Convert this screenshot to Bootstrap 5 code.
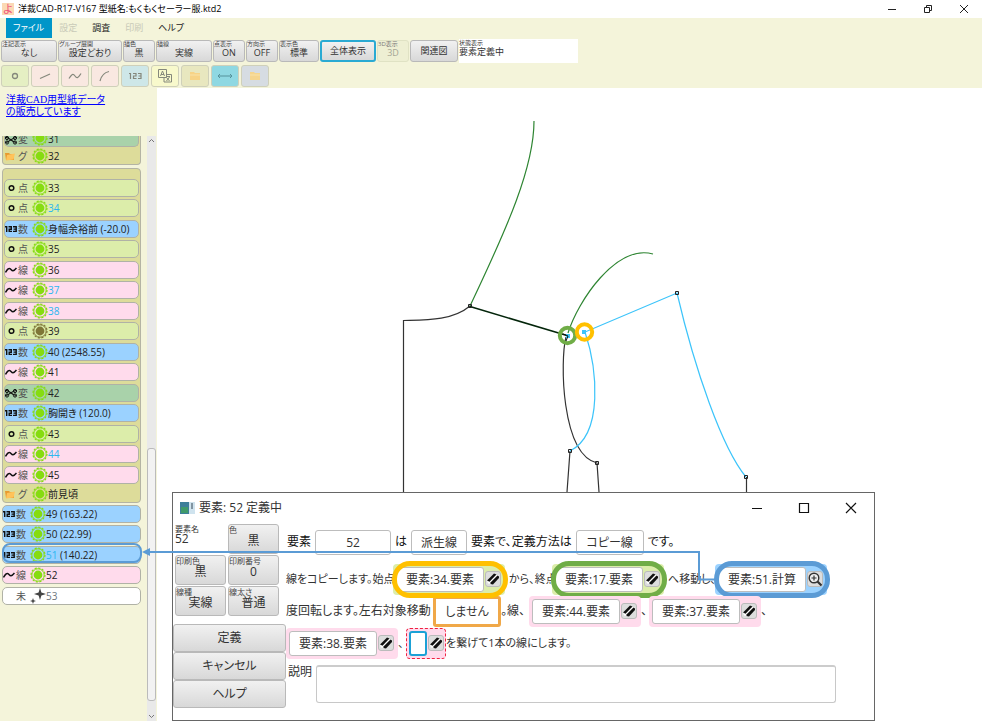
<!DOCTYPE html>
<html lang="ja">
<head>
<meta charset="utf-8">
<meta name="viewport" content="width=device-width, initial-scale=1">
<title>洋裁CAD-R17-V167</title>
<link href="https://cdn.jsdelivr.net/npm/bootstrap@5.3.0/dist/css/bootstrap.min.css" rel="stylesheet">
<style>
body{font-family:"Open Sans","Noto Sans CJK JP",sans-serif;font-size:10px;line-height:14px;font-feature-settings:"palt";color:#222;background:#fff}
input,textarea,button{font-feature-settings:"palt"}
.app{min-height:100vh}
.title-bar{height:18px;font-size:9px;padding-left:2px;color:#000}
.app-logo{width:12px;height:12px;background:#fbd9b4;color:#f0507a;font-size:11px;line-height:12px;text-align:center}
.win-btn{width:36px;height:18px;border:0;background:none;padding:0;display:flex;align-items:center;justify-content:center}
.cream{background:#f4f4da}
.menu-bar{padding-left:6px;font-size:9px}
.menu-item{height:20px;padding:0 8px 0 7px;line-height:20px;color:#222;text-decoration:none}
.menu-item.active{background:#0096c9;color:#fff}
.menu-item.off{color:#c9cab8}
.tools{height:25px;padding:1px;gap:1px}
.grey-btn{border:1px solid #b9b9b9;border-radius:3px;background:linear-gradient(#f1f1f1,#d8d8d8);color:#333;padding:0;font-size:9px;height:22px;line-height:10px;display:flex;flex-direction:column;align-items:center;justify-content:center}
.grey-btn small{align-self:flex-start;font-size:6px;line-height:7px;white-space:nowrap;color:#444}
.grey-btn:has(small){justify-content:flex-start}
.grey-btn.on{border:2px solid #2aaad3}
.grey-btn:disabled{border-color:#e0e2c4;background:#eeefd3;color:#a5a694}
.grey-btn:disabled small{color:#777}
.w-32{width:32px}.w-40{width:40px}.w-48{width:48px}.w-56{width:56px}.w-64{width:64px}
.status-box{width:119px;height:24px;padding-top:1px;background:#fff;font-size:9px;line-height:10px;color:#333}
.status-box small{display:block;font-size:6px;line-height:7px}
.icons{height:25px;padding:2px 1px;gap:2px}
.tile{width:28px;height:22px;border:1px solid #cfd0ba;border-radius:3px;padding:0;display:flex;align-items:center;justify-content:center;color:#85887c}
.t-green{background:#e5efc3}.t-pink{background:#f9e8e1}.t-blue{background:#cee7e8}.t-yellow{background:#f8f9cc}.t-olive{background:#e8e7bf}.t-teal{background:#8fd8e2}.t-grey{background:#d6dce2}
.side{width:157px}
.promo{font-family:"Liberation Serif","Noto Sans CJK JP",serif;font-size:10px;line-height:12px;padding:6px 0 0 6px;height:48px}
.promo a{color:#00f}
.tree{width:147px;padding-left:2px}
.group-box{width:139px;border:1px solid #b4b4a4;border-radius:4px;background:#dddc9a;padding:0 1px}
.group-box.cut{border-top:0;border-radius:0 0 4px 4px;margin-bottom:3px;height:29px}
.group-box.full{padding-top:10px;margin-bottom:2px}
.node{position:relative;height:18px;border:1px solid #b0b2a6;border-radius:5px;display:flex;align-items:center;margin-bottom:2px;color:#222;text-decoration:none;white-space:nowrap}
.node:nth-child(even){margin-bottom:3px}
.tree>.node{width:139px}
.node .kind{width:12px;height:12px;flex:none}
.node .kanji{width:15px;padding-left:1px;color:#555;flex:none}
.node .sun{width:16px;height:16px;flex:none;color:#86dc10}
.node .sun.dim{color:#7f7638}
.node.cut{height:11px;border-top:0;border-radius:0 0 5px 5px;align-items:flex-end;overflow:hidden;margin-bottom:1px}
.node .copied{color:#29b6f0}
.n-point{background:#dcedaa}.n-num{background:#9bd2ff}.n-line{background:#ffdbec}.n-mod{background:#a9d2aa}.n-none{background:#fff}
.node.n-folder{border-color:transparent;height:16px;margin:0}
.picked::after{content:"";position:absolute;left:-1px;right:-2px;top:-4px;bottom:0;border:2px solid #5b9bd5;border-radius:8px}
.scroller{width:9px;background:#e9e9e9}
.before{flex:301}.after{flex:10}
.thumb{border:1px solid #bbb;border-radius:3px;background:#f2f2f2;flex:251}
.canvas{min-width:0}
.drawing{width:100%;height:100%;position:absolute;left:0;top:0}
.dialog-win{position:absolute;left:15px;bottom:0;width:703px;height:229px;border:1px solid #666;background:#fff;font-size:12px;color:#333}
.dlg-title{height:30px;padding-left:7px;font-size:12px}
.dlg-btn{width:47px;height:30px;border:0;background:none;padding:0;display:flex;align-items:center;justify-content:center}
.dlg-left{width:113px}
.props{display:grid;grid-template-columns:51px 51px;gap:1px 2px;padding:1px 2px 8px}
.props .grey-btn{height:30px;font-size:12px;line-height:13px}
.props small{font-size:8px;line-height:9px}
.name-cell{height:30px;line-height:12px;font-size:12px}
.name-cell small{display:block}
.wide-btn{height:28px;font-size:12px}
.formula{padding-top:1px;font-size:12px}
.f-row{height:32px;display:flex;align-items:center;white-space:nowrap}
.f-row.head{height:39px;padding-bottom:3px;gap:4px;color:#111;padding-left:1px}
.f-row.tight{font-size:11px}
.field{border:1px solid #bdbdbd;border-radius:3px;height:25px;padding:0;font-size:12px;color:#333;background:#fff;text-align:center;min-width:0;flex:none}
.w-76{width:76px}.w-68{width:68px}.w-88{width:88px}.w-18{width:18px}
.slot{position:relative;display:flex;align-items:center;gap:1px;height:31px;padding:0 3px;border-radius:4px;width:112px;flex:none}
.slot.tiny{width:40px;padding:0 2px;border:1px dashed #f02040}
.slot.tiny .field{border:2px solid #1ba1d6}
.erase{width:16px;height:16px;border:1px solid #bbb;border-radius:3px;background:#ddd;padding:0;display:flex;flex:none}
.ring::after{content:"";position:absolute;inset:-3px -3px -3px -1px;border:5px solid;border-radius:18px;pointer-events:none}
.r-gold::after{border-color:#ffc000}.r-green::after{border-color:#70ad47}.r-blue::after{border-color:#5b9bd5}
.choice{width:68px;height:31px;border:3px solid #f0a848;flex:none}
.t-107{width:107px}.t-47{width:47px}.t-147{width:147px}.t-28{width:28px}.t-8{width:8px}
.memo-row{padding:6px 0 0 2px;gap:4px}
.memo{width:520px;height:38px;border:1px solid #c8c8c8;border-top:2px solid #ccc;border-radius:3px;resize:none}
.links{position:absolute;left:0;top:0;width:100%;height:100%;pointer-events:none}
</style>
<script src="https://cdn.jsdelivr.net/npm/bootstrap@5.3.0/dist/js/bootstrap.bundle.min.js"></script>
</head>
<body>
<svg class="d-none" aria-hidden="true">
  <symbol id="sun" viewBox="0 0 16 16"><circle cx="8" cy="8" r="7" fill="none" stroke="currentColor" stroke-width="1.2" stroke-dasharray="2.2 1.464"/><circle cx="8" cy="8" r="6.200" fill="none" stroke="currentColor" stroke-width="1"/><circle cx="8" cy="8" r="4.400" fill="currentColor"/></symbol>
  <symbol id="k-point" viewBox="0 0 12 12"><circle cx="6.500" cy="6" r="2.300" fill="none" stroke="#111" stroke-width="1.500"/></symbol>
  <symbol id="k-line" viewBox="0 0 12 12"><path d="M.5 8.500C2.500 5 4 3.500 5.500 5S8 8.500 11.500 4" fill="none" stroke="#111" stroke-width="1.500"/></symbol>
  <symbol id="k-num" viewBox="0 0 12 12"><path d="M0 3.700H1.700V9M3.500 3.700H6.300V6.200H4.200V8.400H7M8 3.700H11.200V8.400H8M8.500 6.100H11" fill="none" stroke="#111" stroke-width="1.400"/></symbol>
  <symbol id="k-mod" viewBox="0 0 12 12"><path d="M0 3.500C4 2 7 9 11.500 8.500M0 8.500C4 9 7 3 11.500 3.500" fill="none" stroke="#111" stroke-width="1.200"/><circle cx="2" cy="4" r="1.600" fill="none" stroke="#111"/><circle cx="2" cy="8.500" r="1.600" fill="none" stroke="#111"/><circle cx="10" cy="4" r="1.600" fill="none" stroke="#111"/><circle cx="10" cy="8.500" r="1.600" fill="none" stroke="#111"/></symbol>
  <symbol id="k-folder" viewBox="0 0 12 12"><path d="M0 3H4L5 4H9V10H1Z" fill="#e89a2e"/><path d="M2 5L10 3.500L8.500 9.500L1 10.500Z" fill="#ffc35a"/></symbol>
  <symbol id="eraser" viewBox="0 0 14 14"><path d="M1 8.500L8 1.500L13 4L6.500 12L2 11.500Z" fill="#fff"/><path d="M1 8.500L8 1.500L10.500 2.500L3.500 9.800Z" fill="#111"/><path d="M4.500 10.500L11.500 3.500L13 4.500V6L7 12.500L4.500 12Z" fill="#111"/></symbol>
</svg>

<div class="app d-flex flex-column position-relative">
  <header>
    <div class="title-bar d-flex align-items-center">
      <span class="app-logo">よ</span><span class="ps-1">洋裁CAD-R17-V167 型紙名:もくもくセーラー服.ktd2</span>
      <div class="d-flex ms-auto">
        <button class="win-btn" aria-label="最小化"><svg width="10" height="10"><path d="M1 5.500H9" stroke="#222"/></svg></button>
        <button class="win-btn" aria-label="元に戻す"><svg width="10" height="10"><path d="M1.500 3.500H6.500V8.500H1.500ZM3.500 3V1.500H8.500V6.500H7" fill="none" stroke="#222"/></svg></button>
        <button class="win-btn" aria-label="閉じる"><svg width="10" height="10"><path d="M1 1L9 9M9 1L1 9" stroke="#222"/></svg></button>
      </div>
    </div>
    <div class="cream">
      <nav class="menu-bar d-flex">
        <a href="#" class="menu-item active">ファイル</a><a href="#" class="menu-item off">設定</a><a href="#" class="menu-item">調査</a><a href="#" class="menu-item off">印刷</a><a href="#" class="menu-item">ヘルプ</a>
      </nav>
      <div class="tools d-flex align-items-center">
        <button class="grey-btn w-56"><small>注記表示</small>なし</button>
        <button class="grey-btn w-64"><small>グループ展開</small>設定どおり</button>
        <button class="grey-btn w-32"><small>描色</small>黒</button>
        <button class="grey-btn w-56"><small>描線</small>実線</button>
        <button class="grey-btn w-32"><small>点表示</small>ON</button>
        <button class="grey-btn w-32"><small>方向示</small>OFF</button>
        <button class="grey-btn w-40"><small>表示色</small>標準</button>
        <button class="grey-btn w-56 on">全体表示</button>
        <button class="grey-btn w-32" disabled><small>3D表示</small>3D</button>
        <button class="grey-btn w-48">関連図</button>
        <div class="status-box"><small>状態表示</small>要素定義中</div>
      </div>
      <div class="icons d-flex">
        <button class="tile t-green" aria-label="点"><svg width="18" height="14"><circle cx="9" cy="7" r="2.500" fill="none" stroke="currentColor" stroke-width="1.300"/></svg></button>
        <button class="tile t-pink" aria-label="直線"><svg width="18" height="14"><path d="M4 9.500L14 5" stroke="currentColor" stroke-width="1.200"/></svg></button>
        <button class="tile t-pink" aria-label="曲線"><svg width="18" height="14"><path d="M3 9.500C6 5 7 4 9 7S12 9 15 4.500" fill="none" stroke="currentColor" stroke-width="1.200"/></svg></button>
        <button class="tile t-pink" aria-label="円弧"><svg width="18" height="14"><path d="M4 12Q6 4 13 2.500" fill="none" stroke="currentColor" stroke-width="1.200"/></svg></button>
        <button class="tile t-blue" aria-label="数値"><svg width="16" height="14"><path d="M2 4.500H3.500V10M6 4.500H9V7H6.500V9.500H9.500M11 4.500H14V9.500H11M11.500 7H14" fill="none" stroke="currentColor" stroke-width="1.200"/></svg></button>
        <button class="tile t-yellow" aria-label="文字"><svg width="16" height="16"><path d="M1.500 1.500H9.500V9.500H1.500ZM7 9.500V14H14.500V6.500H9.500M3.500 8L5.500 3L7.500 8M4 6.500H7M9 8.500H13M9.500 13L12.500 9M9.500 9.500L12.500 13" fill="none" stroke="currentColor"/></svg></button>
        <button class="tile t-olive" aria-label="グループ"><svg width="12" height="10"><path d="M1 1H5L6 2H11V9H1Z" fill="#f7d386"/><path d="M1 4H11" stroke="#f9e2a8"/></svg></button>
        <button class="tile t-teal" aria-label="寸法"><svg width="18" height="10"><path d="M2 5H16M4 3L2 5L4 7M14 3L16 5L14 7" fill="none" stroke="#55929b"/></svg></button>
        <button class="tile t-grey" aria-label="フォルダ"><svg width="12" height="10"><path d="M1 1H5L6 2H11V9H1Z" fill="#f5d58e"/><path d="M1 4H11" stroke="#f9e2a8"/></svg></button>
      </div>
    </div>
  </header>

  <div class="d-flex flex-grow-1">
    <aside class="side cream flex-shrink-0 d-flex flex-column">
      <div class="promo"><a href="#">洋裁CAD用型紙データ<br>の販売しています</a></div>
      <div class="d-flex flex-grow-1">
        <div class="tree">
          <div class="group-box cut">
            <a href="#" class="node cut n-mod"><svg class="kind"><use href="#k-mod"/></svg><span class="kanji">変</span><svg class="sun"><use href="#sun"/></svg><span>31</span></a>
            <a href="#" class="node n-folder"><svg class="kind"><use href="#k-folder"/></svg><span class="kanji">グ</span><svg class="sun"><use href="#sun"/></svg><span>32</span></a>
          </div>
          <div class="group-box full">
            <a href="#" class="node n-point"><svg class="kind"><use href="#k-point"/></svg><span class="kanji">点</span><svg class="sun"><use href="#sun"/></svg><span>33</span></a>
            <a href="#" class="node n-point"><svg class="kind"><use href="#k-point"/></svg><span class="kanji">点</span><svg class="sun"><use href="#sun"/></svg><span class="copied">34</span></a>
            <a href="#" class="node n-num"><svg class="kind"><use href="#k-num"/></svg><span class="kanji">数</span><svg class="sun"><use href="#sun"/></svg><span>身幅余裕前 (-20.0)</span></a>
            <a href="#" class="node n-point"><svg class="kind"><use href="#k-point"/></svg><span class="kanji">点</span><svg class="sun"><use href="#sun"/></svg><span>35</span></a>
            <a href="#" class="node n-line"><svg class="kind"><use href="#k-line"/></svg><span class="kanji">線</span><svg class="sun"><use href="#sun"/></svg><span>36</span></a>
            <a href="#" class="node n-line"><svg class="kind"><use href="#k-line"/></svg><span class="kanji">線</span><svg class="sun"><use href="#sun"/></svg><span class="copied">37</span></a>
            <a href="#" class="node n-line"><svg class="kind"><use href="#k-line"/></svg><span class="kanji">線</span><svg class="sun"><use href="#sun"/></svg><span class="copied">38</span></a>
            <a href="#" class="node n-point"><svg class="kind"><use href="#k-point"/></svg><span class="kanji">点</span><svg class="sun dim"><use href="#sun"/></svg><span>39</span></a>
            <a href="#" class="node n-num"><svg class="kind"><use href="#k-num"/></svg><span class="kanji">数</span><svg class="sun"><use href="#sun"/></svg><span>40 (2548.55)</span></a>
            <a href="#" class="node n-line"><svg class="kind"><use href="#k-line"/></svg><span class="kanji">線</span><svg class="sun"><use href="#sun"/></svg><span>41</span></a>
            <a href="#" class="node n-mod"><svg class="kind"><use href="#k-mod"/></svg><span class="kanji">変</span><svg class="sun"><use href="#sun"/></svg><span>42</span></a>
            <a href="#" class="node n-num"><svg class="kind"><use href="#k-num"/></svg><span class="kanji">数</span><svg class="sun"><use href="#sun"/></svg><span>胸開き (120.0)</span></a>
            <a href="#" class="node n-point"><svg class="kind"><use href="#k-point"/></svg><span class="kanji">点</span><svg class="sun"><use href="#sun"/></svg><span>43</span></a>
            <a href="#" class="node n-line"><svg class="kind"><use href="#k-line"/></svg><span class="kanji">線</span><svg class="sun"><use href="#sun"/></svg><span class="copied">44</span></a>
            <a href="#" class="node n-line"><svg class="kind"><use href="#k-line"/></svg><span class="kanji">線</span><svg class="sun"><use href="#sun"/></svg><span>45</span></a>
            <a href="#" class="node n-folder"><svg class="kind"><use href="#k-folder"/></svg><span class="kanji">グ</span><svg class="sun"><use href="#sun"/></svg><span>前見頃</span></a>
          </div>
          <a href="#" class="node n-num"><svg class="kind"><use href="#k-num"/></svg><span class="kanji">数</span><svg class="sun"><use href="#sun"/></svg><span>49 (163.22)</span></a>
          <a href="#" class="node n-num"><svg class="kind"><use href="#k-num"/></svg><span class="kanji">数</span><svg class="sun"><use href="#sun"/></svg><span>50 (22.99)</span></a>
          <a href="#" class="node n-num picked"><svg class="kind"><use href="#k-num"/></svg><span class="kanji">数</span><svg class="sun"><use href="#sun"/></svg><span><span class="copied">51</span> (140.22)</span></a>
          <a href="#" class="node n-line"><svg class="kind"><use href="#k-line"/></svg><span class="kanji">線</span><svg class="sun"><use href="#sun"/></svg><span>52</span></a>
          <a href="#" class="node n-none"><span class="kind"></span><span class="kanji">未</span><svg class="sun" viewBox="0 0 16 16"><path d="M10 0L11.400 4.600L16 6L11.400 7.400L10 12L8.600 7.400L4 6L8.600 4.600ZM3 10L3.800 12.200L6 13L3.800 13.800L3 16L2.200 13.800L0 13L2.200 12.200Z" fill="#444"/></svg><span class="text-secondary">53</span></a>
        </div>
        <div class="scroller d-flex flex-column align-items-stretch">
          <svg width="9" height="10"><path d="M2 6L4.500 3.500L7 6" fill="none" stroke="#777"/></svg>
          <div class="before"></div>
          <div class="thumb"></div>
          <div class="after"></div>
          <svg width="9" height="10"><path d="M2 4L4.500 6.500L7 4" fill="none" stroke="#777"/></svg>
        </div>
      </div>
    </aside>

    <main class="canvas position-relative flex-grow-1">
      <svg class="drawing" viewBox="157 88 825 633" preserveAspectRatio="xMinYMin meet" fill="none">
        <g stroke="#333" stroke-width="1.200">
          <path d="M403.500 492V320.500C425 320 452 321 470 306"/>
          <path d="M566 337C560 360 561 454 597 463L599 492M570 451L567 492M746.500 477V492"/>
        </g>
        <path d="M534 121C534 167 508 226 470 306M568 333C578 301 616 244 653 254" stroke="#2e8532" stroke-width="1.200"/>
        <path d="M470 306.500L567 335.500" stroke="#03250a" stroke-width="1.500"/>
        <path d="M570 451C604 434 597 368 585 332L677 293C695 370 722 448 746 477" stroke="#3cc4fa" stroke-width="1.200"/>
        <path d="M468.500 304.500h3v3h-3zM675.500 291.500h3v3h-3zM568.500 449.500h3v3h-3zM595.500 461.500h3v3h-3zM744.500 475.500h3v3h-3z" stroke="#222"/>
        <path d="M582 330h4v4h-4zM566 334h4v4h-4z" fill="#3cc4fa"/><path d="M563 334L568 336L566 341" stroke="#111"/>
        <circle cx="567.500" cy="335.500" r="7.700" stroke="#70ad47" stroke-width="4"/>
        <circle cx="584.500" cy="332" r="7.700" stroke="#ffc000" stroke-width="4"/>
      </svg>

      <section class="dialog-win" aria-label="要素: 52 定義中">
        <div class="dlg-title d-flex align-items-center">
          <svg width="15" height="12"><path d="M0 0H15V12H0Z" fill="#cfe3ee"/><path d="M0 0H9V12H0Z" fill="#3d7f9a"/><path d="M1 5H8V11H1Z" fill="#3f9a6a"/><path d="M12 1V7" stroke="#345" stroke-width="1"/></svg>
          <span class="ps-1">要素: 52 定義中</span>
          <div class="d-flex ms-auto">
            <button class="dlg-btn" aria-label="最小化"><svg width="12" height="12"><path d="M1 6.500H11" stroke="#111"/></svg></button>
            <button class="dlg-btn" aria-label="最大化"><svg width="12" height="12"><path d="M1.500 1.500H10.500V10.500H1.500Z" fill="none" stroke="#111" stroke-width="1.200"/></svg></button>
            <button class="dlg-btn" aria-label="閉じる"><svg width="12" height="12"><path d="M1 1L11 11M11 1L1 11" stroke="#111" stroke-width="1.200"/></svg></button>
          </div>
        </div>
        <div class="d-flex">
          <div class="dlg-left">
            <div class="props">
              <div class="name-cell"><small>要素名</small>52</div>
              <button class="grey-btn"><small>色</small>黒</button>
              <button class="grey-btn"><small>印刷色</small>黒</button>
              <button class="grey-btn"><small>印刷番号</small>0</button>
              <button class="grey-btn"><small>線種</small>実線</button>
              <button class="grey-btn"><small>線太さ</small>普通</button>
            </div>
            <div class="d-flex flex-column">
              <button class="grey-btn wide-btn">定義</button>
              <button class="grey-btn wide-btn">キャンセル</button>
              <button class="grey-btn wide-btn">ヘルプ</button>
            </div>
          </div>
          <div class="formula">
            <div class="f-row head">
              <label for="f-no">要素</label><input id="f-no" class="field w-76" value="52"><label for="f-kind">は</label><input id="f-kind" class="field w-56" value="派生線"><label for="f-way">要素で、定義方法は</label><input id="f-way" class="field w-68" value="コピー線"><span>です。</span>
            </div>
            <div class="f-row tight">
              <span class="t-107">線をコピーします。始点</span>
              <span class="slot n-point ring r-gold"><input class="field w-88" aria-label="始点" value="要素:34.要素"><button class="erase" aria-label="消去"><svg width="14" height="14"><use href="#eraser"/></svg></button></span>
              <span class="t-47 ps-1">から、終点</span>
              <span class="slot n-point ring r-green"><input class="field w-88" aria-label="終点" value="要素:17.要素"><button class="erase" aria-label="消去"><svg width="14" height="14"><use href="#eraser"/></svg></button></span>
              <span class="t-47 ps-1">へ移動し、</span>
              <span class="slot n-num ring r-blue ms-1"><input class="field w-88" aria-label="角度" value="要素:51.計算"><button class="erase" aria-label="検索"><svg width="14" height="14"><circle cx="6" cy="6" r="4.800" fill="#eee" stroke="#333" stroke-width="1.400"/><path d="M3.500 6H8.500M6 3.500V8.500" stroke="#333" stroke-width="1.200"/><path d="M9.500 9.500L13.500 13.500" stroke="#333" stroke-width="2.200"/></svg></button></span>
            </div>
            <div class="f-row">
              <span class="t-147">度回転します。左右対象移動</span>
              <input class="field choice" aria-label="左右対象移動" value="しません">
              <span class="t-28">。線、</span>
              <span class="slot n-line"><input class="field w-88" aria-label="線1" value="要素:44.要素"><button class="erase" aria-label="消去"><svg width="14" height="14"><use href="#eraser"/></svg></button></span>
              <span class="t-8">、</span>
              <span class="slot n-line"><input class="field w-88" aria-label="線2" value="要素:37.要素"><button class="erase" aria-label="消去"><svg width="14" height="14"><use href="#eraser"/></svg></button></span>
              <span class="t-8">、</span>
            </div>
            <div class="f-row tight">
              <span class="slot n-line"><input class="field w-88" aria-label="線3" value="要素:38.要素"><button class="erase" aria-label="消去"><svg width="14" height="14"><use href="#eraser"/></svg></button></span>
              <span class="t-8">、</span>
              <span class="slot tiny n-line"><input class="field w-18" aria-label="線4"><button class="erase" aria-label="消去"><svg width="14" height="14"><use href="#eraser"/></svg></button></span>
              <span>を繋げて1本の線にします。</span>
            </div>
            <div class="memo-row d-flex"><label for="memo">説明</label><textarea id="memo" class="memo"></textarea></div>
          </div>
        </div>
      </section>
    </main>
  </div>

  <svg class="links" aria-hidden="true"><path d="M149 552H699V579.500H714" fill="none" stroke="#5b9bd5" stroke-width="2"/><path d="M142 552L150 548V556Z" fill="#5b9bd5"/></svg>
</div>
</body>
</html>
